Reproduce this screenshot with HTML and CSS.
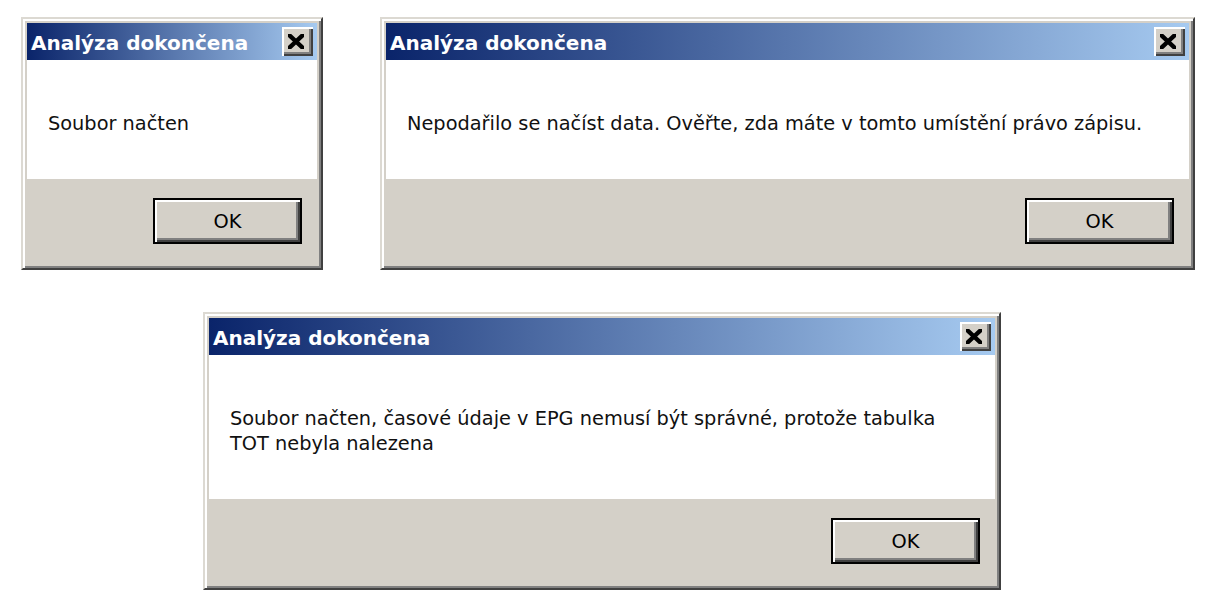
FILE: index.html
```html
<!DOCTYPE html>
<html lang="cs">
<head>
<meta charset="utf-8">
<title>Analýza dokončena</title>
<link rel="stylesheet" href="styles.css">
</head>
<body>
<div class="desk">
  <div class="row-top">
    <div class="dialog d-small">
      <div class="titlebar">
        <span class="title">Analýza dokončena</span>
        <span class="close" aria-label="Zavřít">
          <svg width="16" height="15" viewBox="0 0 16 15"><path d="M-1 -1L17 16M17 -1L-1 16" stroke="#000" stroke-width="4.3" fill="none"/></svg>
        </span>
      </div>
      <div class="msg">Soubor načten</div>
      <div class="footer"><button class="ok">OK</button></div>
    </div>
    <div class="dialog d-wide">
      <div class="titlebar">
        <span class="title">Analýza dokončena</span>
        <span class="close" aria-label="Zavřít">
          <svg width="16" height="15" viewBox="0 0 16 15"><path d="M-1 -1L17 16M17 -1L-1 16" stroke="#000" stroke-width="4.3" fill="none"/></svg>
        </span>
      </div>
      <div class="msg">Nepodařilo se načíst data. Ověřte, zda máte v tomto umístění právo zápisu.</div>
      <div class="footer"><button class="ok">OK</button></div>
    </div>
  </div>
  <div class="row-bottom">
    <div class="dialog d-mid">
      <div class="titlebar">
        <span class="title">Analýza dokončena</span>
        <span class="close" aria-label="Zavřít">
          <svg width="16" height="15" viewBox="0 0 16 15"><path d="M-1 -1L17 16M17 -1L-1 16" stroke="#000" stroke-width="4.3" fill="none"/></svg>
        </span>
      </div>
      <div class="msg">Soubor načten, časové údaje v EPG nemusí být správné, protože tabulka<br>TOT nebyla nalezena</div>
      <div class="footer"><button class="ok">OK</button></div>
    </div>
  </div>
</div>
</body>
</html>
```

FILE: styles.css
```css
html, body {
  margin: 0;
  background: #ffffff;
  font-family: "DejaVu Sans", Tahoma, Verdana, sans-serif;
}

.desk {
  padding: 17px 0 0 21px;
}

.row-top {
  display: flex;
  align-items: flex-start;
  gap: 57px;
}

.row-bottom {
  margin: 42px 0 0 182px;
}

.dialog {
  box-sizing: border-box;
  display: flex;
  flex-direction: column;
  background: #d4d0c8;
  border: 2px solid;
  border-color: #dcd9d2 #404040 #404040 #dcd9d2;
  box-shadow: inset 2px 2px #ffffff, inset -2px -2px #808080;
  padding: 4px;
}

.d-small { width: 302px; }
.d-wide { width: 815px; }
.d-mid { width: 798px; }

.titlebar {
  height: 37px;
  display: flex;
  align-items: center;
  justify-content: space-between;
  padding: 0 4px 0 4px;
  background: linear-gradient(to right, #0a246a, #a6caf0);
}

.title {
  color: #ffffff;
  font-weight: bold;
  font-size: 20px;
  padding-top: 2px;
  white-space: nowrap;
}

.close {
  box-sizing: border-box;
  width: 31px;
  height: 29px;
  display: flex;
  align-items: center;
  justify-content: center;
  padding: 0 3px 0 0;
  background: #d4d0c8;
  box-shadow: inset 2px 2px #ffffff, inset -2px -2px #404040, inset -4px -4px #808080;
}

.close svg {
  display: block;
  overflow: hidden;
}

.msg {
  background: #ffffff;
  padding: 51px 21px 43px;
  font-size: 19.35px;
  line-height: 25px;
  color: #111111;
  white-space: nowrap;
}

.footer {
  display: flex;
  justify-content: flex-end;
  padding: 19px 15px 20px;
}

.ok {
  box-sizing: border-box;
  width: 149px;
  height: 46px;
  padding: 0;
  border: 2px solid #000000;
  background: #d4d0c8;
  box-shadow: inset 2px 2px #ffffff, inset -2px -2px #404040, inset -4px -4px #808080;
  font-family: "DejaVu Sans", Tahoma, Verdana, sans-serif;
  font-size: 19.35px;
  color: #000000;
}
```
